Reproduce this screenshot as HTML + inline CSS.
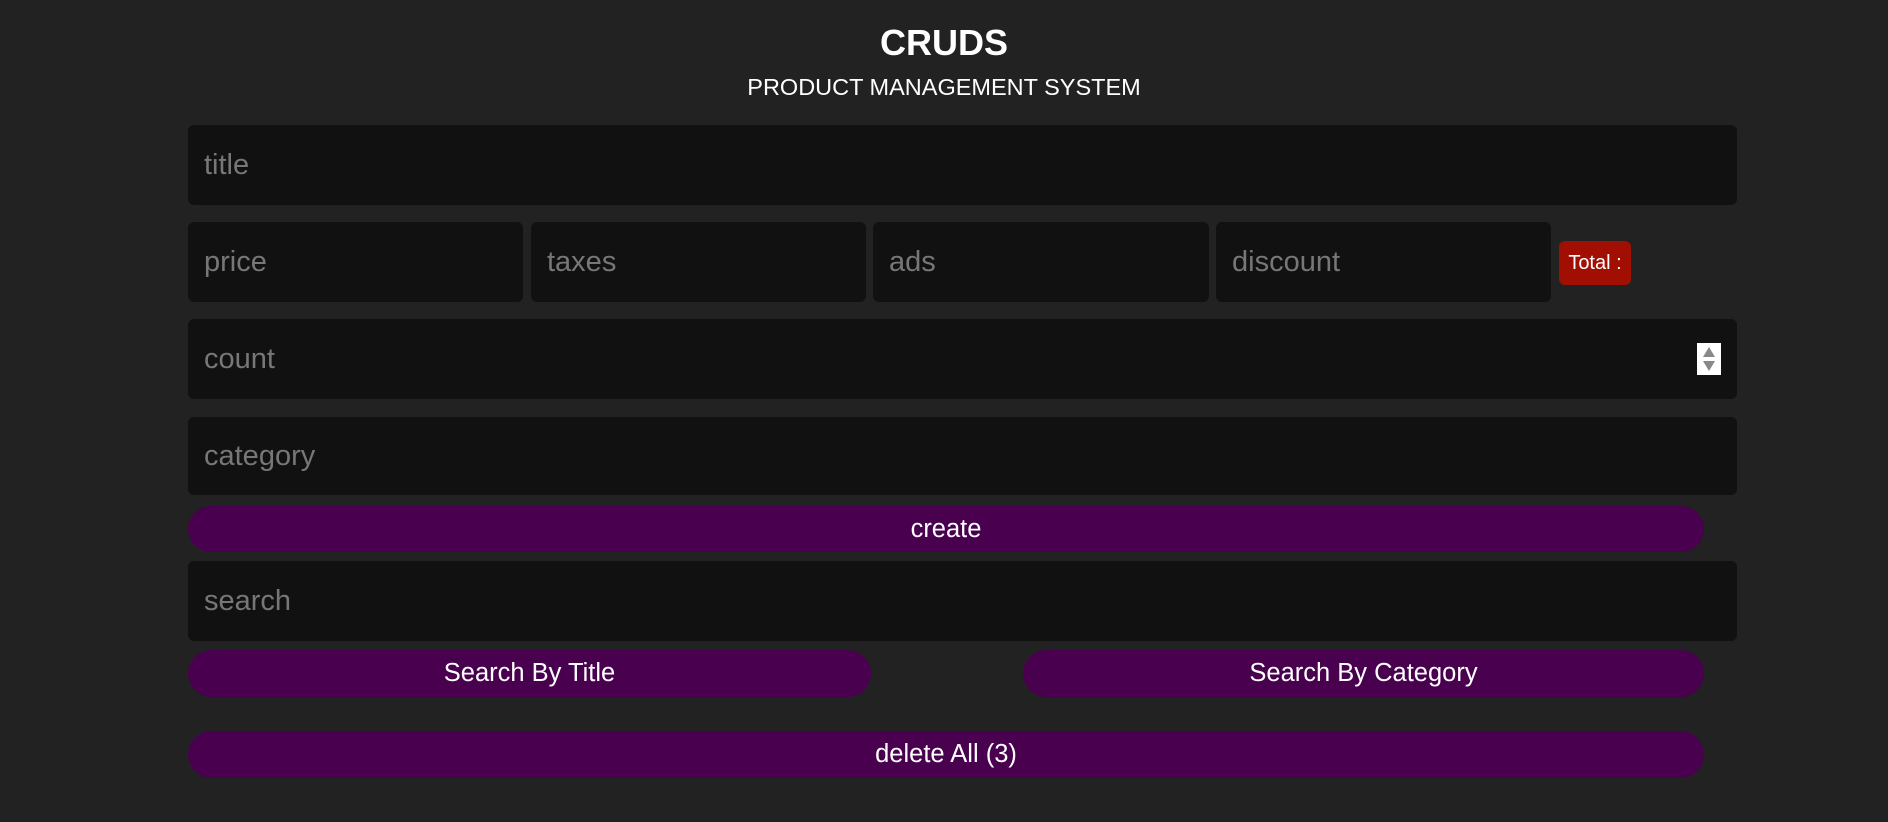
<!DOCTYPE html>
<html><head><style>
body{margin:0;width:1888px;height:822px;background:#222;font-family:"Liberation Sans",Arial,sans-serif;position:relative;overflow:hidden}
.a{position:absolute}
.in{position:absolute;background:#111;border-radius:6px;color:#777;font-size:29px;line-height:1;box-sizing:border-box;padding-left:16px;display:flex;align-items:center}
.bt{position:absolute;background:#48004f;border-radius:24px;color:#fff;font-size:25.5px;display:flex;align-items:center;justify-content:center}
</style></head><body>
<div class="a" style="left:0;width:1888px;top:18px;text-align:center;color:#fff;font-weight:bold;font-size:36px;line-height:50px">CRUDS</div>
<div class="a" style="left:0;width:1888px;top:72px;text-align:center;color:#fff;font-size:23.5px;line-height:30px">PRODUCT MANAGEMENT SYSTEM</div>
<div class="in" style="left:188px;top:125px;width:1549px;height:80px">title</div>
<div class="in" style="left:188px;top:222px;width:335px;height:80px">price</div>
<div class="in" style="left:531px;top:222px;width:335px;height:80px">taxes</div>
<div class="in" style="left:873px;top:222px;width:336px;height:80px">ads</div>
<div class="in" style="left:1216px;top:222px;width:335px;height:80px">discount</div>
<div class="a" style="left:1559px;top:241px;width:72px;height:44px;background:#a00f02;border-radius:6px;color:#fff;font-size:20px;display:flex;align-items:center;justify-content:center">Total :</div>
<div class="in" style="left:188px;top:319px;width:1549px;height:80px">count</div>
<div class="a" style="left:1697px;top:343px;width:24px;height:32px;background:#fff">
<svg width="24" height="32"><path d="M6 14 L12 4 L18 14Z" fill="#888"/><path d="M6 18 L12 28 L18 18Z" fill="#888"/></svg></div>
<div class="in" style="left:188px;top:417px;width:1549px;height:78px">category</div>
<div class="bt" style="left:188px;top:506px;width:1516px;height:46px">create</div>
<div class="in" style="left:188px;top:561px;width:1549px;height:80px">search</div>
<div class="bt" style="left:188px;top:650px;width:683px;height:47px">Search By Title</div>
<div class="bt" style="left:1023px;top:650px;width:681px;height:47px">Search By Category</div>
<div class="bt" style="left:188px;top:731px;width:1516px;height:47px">delete All (3)</div>
</body></html>
